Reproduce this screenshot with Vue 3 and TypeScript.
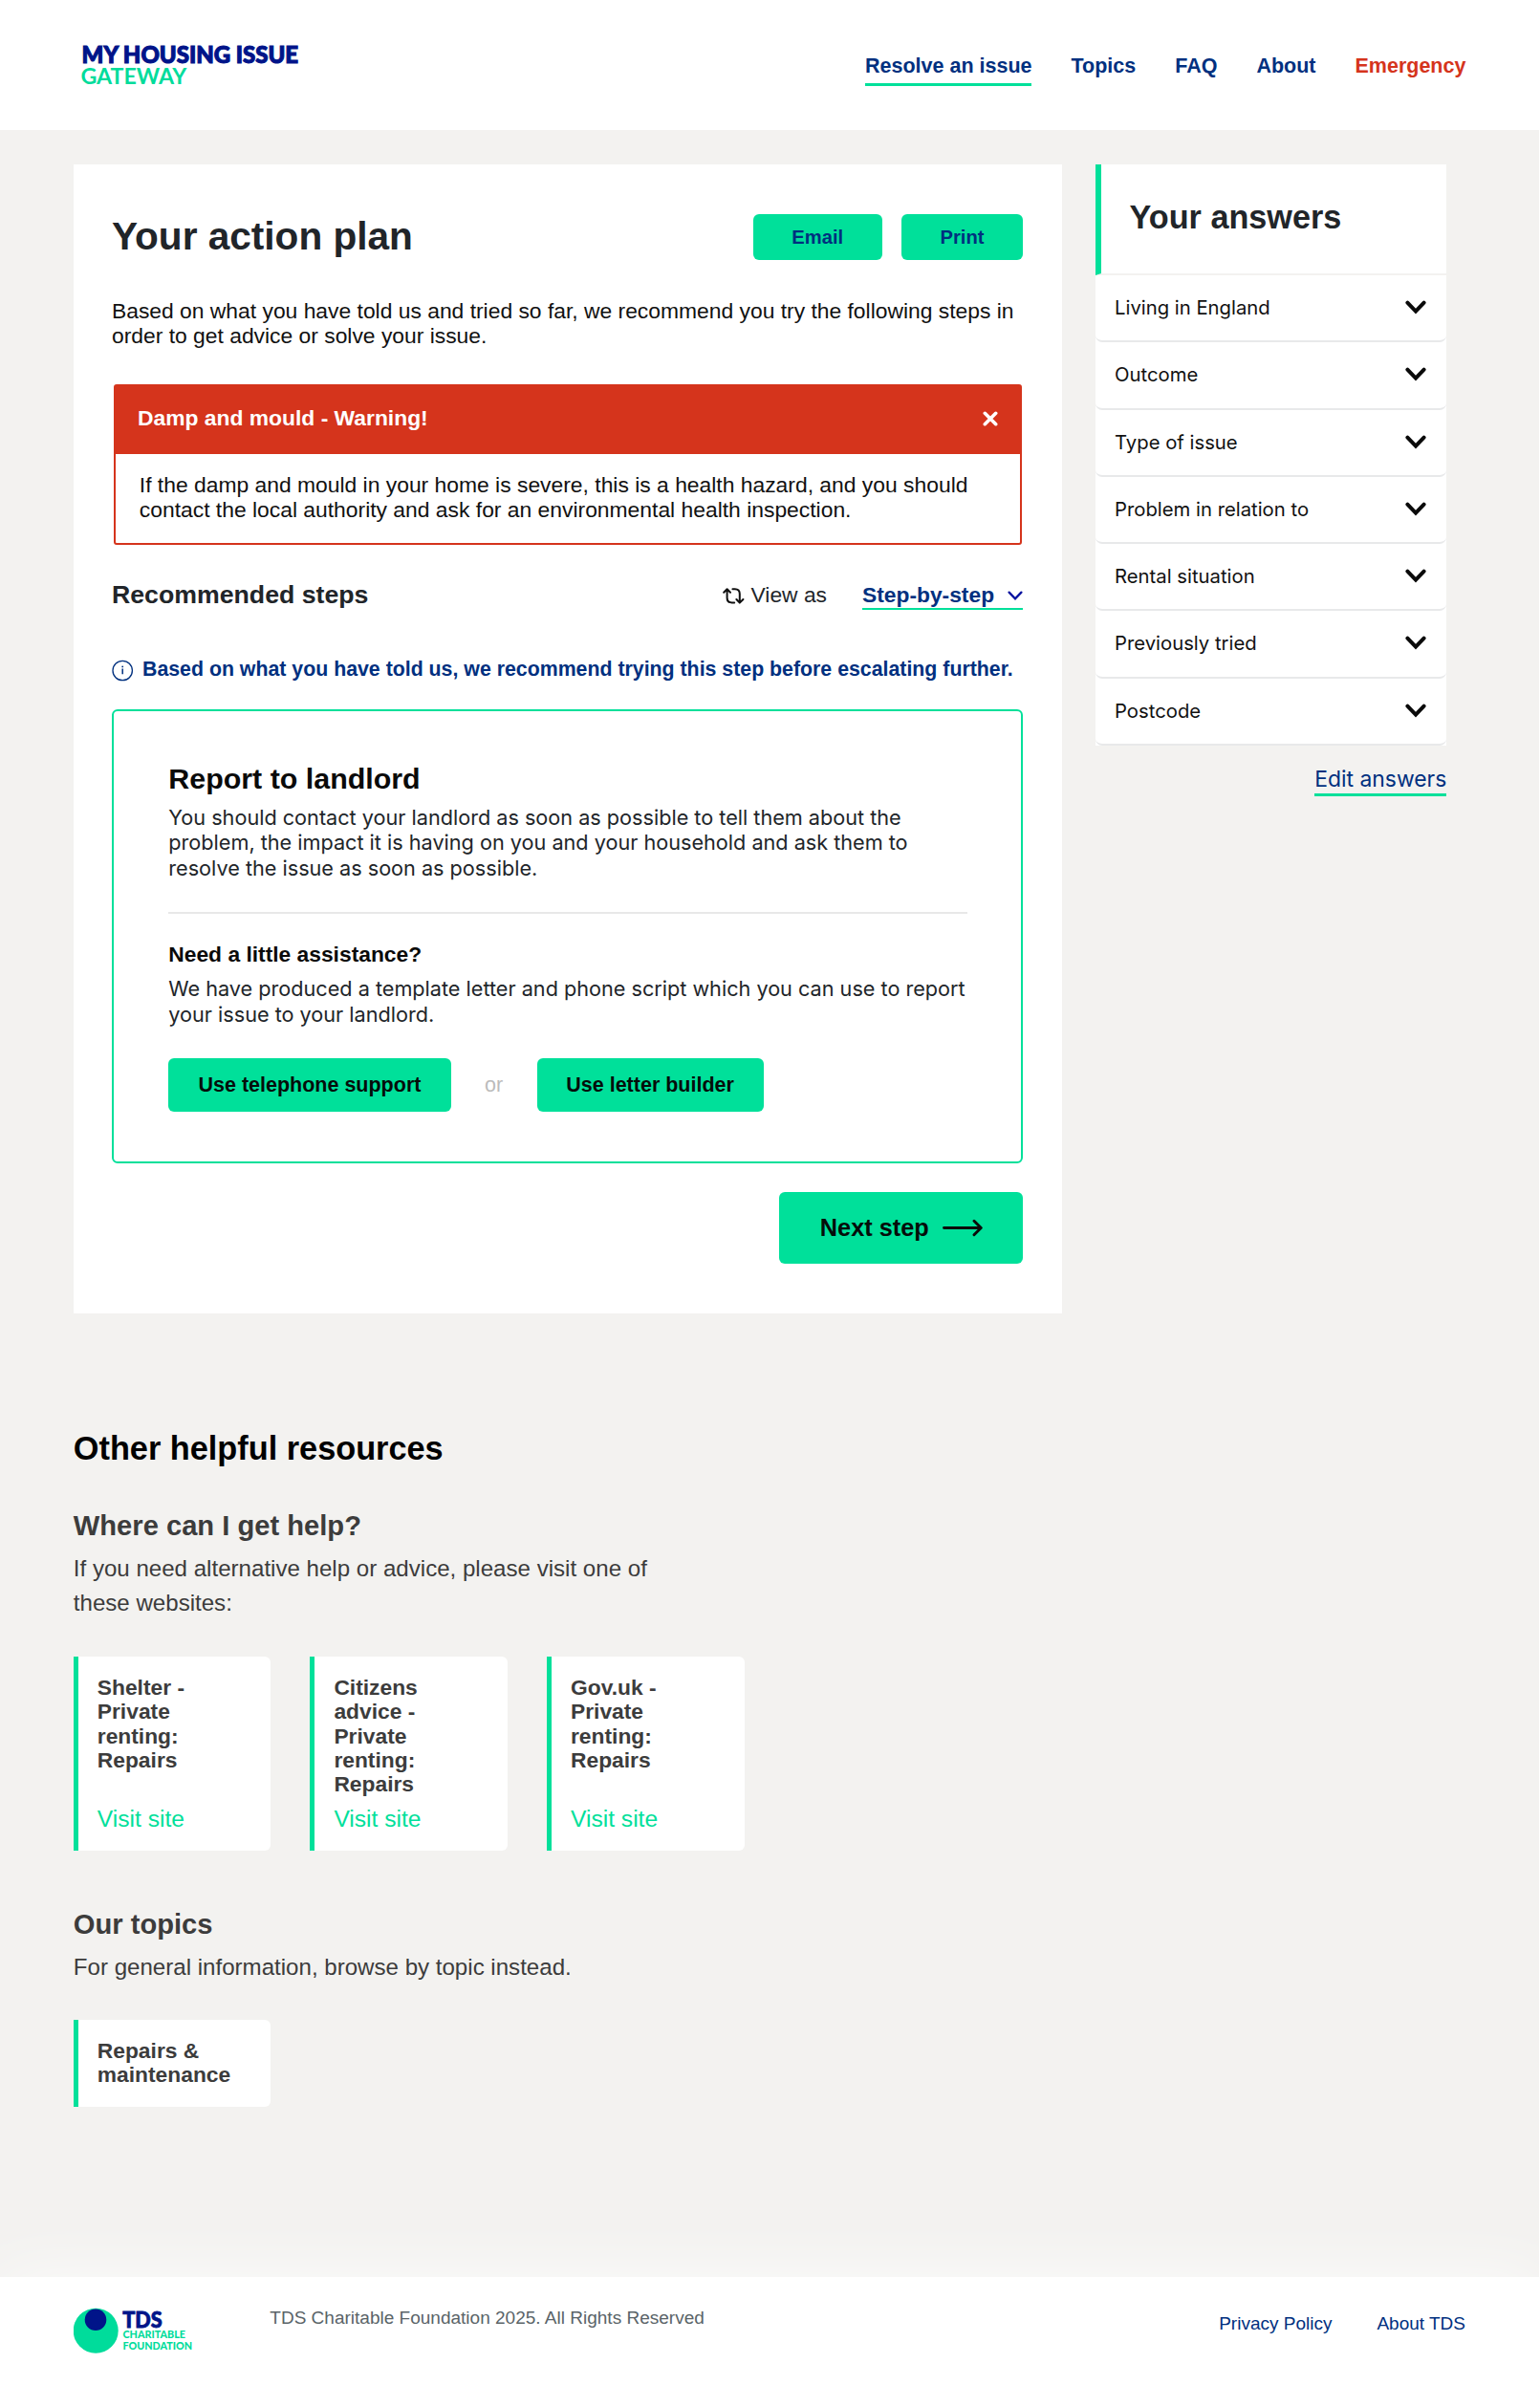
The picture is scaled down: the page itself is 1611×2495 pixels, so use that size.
<script setup lang="ts">
interface NavItem {
  label: string
  active?: boolean
  urgent?: boolean
}

interface Site {
  name: string
}

const nav: NavItem[] = [
  { label: 'Resolve an issue', active: true },
  { label: 'Topics' },
  { label: 'FAQ' },
  { label: 'About' },
  { label: 'Emergency', urgent: true },
]

const answers: string[] = [
  'Living in England',
  'Outcome',
  'Type of issue',
  'Problem in relation to',
  'Rental situation',
  'Previously tried',
  'Postcode',
]

const sites: Site[] = [
  { name: 'Shelter - Private renting: Repairs' },
  { name: 'Citizens advice - Private renting: Repairs' },
  { name: 'Gov.uk - Private renting: Repairs' },
]
</script>

<template>
  <div class="page">
    <header class="header">
      <svg class="brand" width="240" height="60" viewBox="0 0 240 60">
        <text class="brand-top" x="8.6" y="26" textLength="226.4" lengthAdjust="spacingAndGlyphs">MY HOUSING ISSUE</text>
        <text class="brand-sub" x="7.4" y="48" textLength="111" lengthAdjust="spacingAndGlyphs">GATEWAY</text>
      </svg>
      <nav class="nav">
        <a v-for="item in nav" :key="item.label" :class="{ active: item.active, urgent: item.urgent }">{{ item.label }}</a>
      </nav>
    </header>

    <main class="main">
      <section class="plan">
        <div class="plan-head">
          <h1>Your action plan</h1>
          <div class="plan-actions">
            <button class="btn email">Email</button>
            <button class="btn print">Print</button>
          </div>
        </div>
        <p class="intro">Based on what you have told us and tried so far, we recommend you try the following steps in<br />order to get advice or solve your issue.</p>

        <div class="alert">
          <div class="alert-head">
            <span>Damp and mould - Warning!</span>
            <svg width="16" height="16" viewBox="0 0 16 16"><path d="M2.3 2.3 13.7 13.7M13.7 2.3 2.3 13.7" stroke="#fff" stroke-width="3.6" stroke-linecap="round" /></svg>
          </div>
          <p>If the damp and mould in your home is severe, this is a health hazard, and you should<br />contact the local authority and ask for an environmental health inspection.</p>
        </div>

        <div class="steps-head">
          <h2>Recommended steps</h2>
          <div class="view">
            <svg class="cycle" width="23" height="17" viewBox="0 0 23 17" fill="none" stroke="#111" stroke-width="2" stroke-linecap="round" stroke-linejoin="round">
              <path d="M1.2 4.8 4.6 1.3 8 4.8M4.6 1.6V10.4Q4.6 15.4 9.6 15.4H12.2" />
              <path d="M10.4 1.3H12.8Q17.8 1.3 17.8 6.3V15.2M14.4 12 17.8 15.6 21.4 12" />
            </svg>
            <span class="view-label">View as</span>
            <span class="select">Step-by-step
              <svg width="16" height="11" viewBox="0 0 16 11"><path d="M1.6 1.6 8 8.4 14.4 1.6" fill="none" stroke="#0a14a0" stroke-width="2.3" stroke-linecap="round" /></svg>
            </span>
          </div>
        </div>

        <div class="info">
          <svg width="23" height="23" viewBox="0 0 23 23"><circle cx="11.2" cy="11.5" r="10.2" fill="none" stroke="#00307f" stroke-width="1.3" /><path d="M11.2 9.4V15.2" stroke="#00307f" stroke-width="1.5" /><circle cx="11.2" cy="7.4" r=".9" fill="#00307f" /></svg>
          <strong>Based on what you have told us, we recommend trying this step before escalating further.</strong>
        </div>

        <div class="step">
          <h3>Report to landlord</h3>
          <p>You should contact your landlord as soon as possible to tell them about the<br />problem, the impact it is having on you and your household and ask them to<br />resolve the issue as soon as possible.</p>
          <hr />
          <h4>Need a little assistance?</h4>
          <p>We have produced a template letter and phone script which you can use to report<br />your issue to your landlord.</p>
          <div class="step-actions">
            <button class="btn phone">Use telephone support</button>
            <span>or</span>
            <button class="btn letter">Use letter builder</button>
          </div>
        </div>

        <button class="btn next">
          Next step
          <svg width="42" height="19" viewBox="0 0 42 19"><path d="M1.5 9.5H40M33 2.2 40.3 9.5 33 16.8" fill="none" stroke="#0a0a0a" stroke-width="2.9" stroke-linecap="round" stroke-linejoin="round" /></svg>
        </button>
      </section>

      <aside class="side">
        <div class="side-head">Your answers</div>
        <ul>
          <li v-for="a in answers" :key="a">
            <span>{{ a }}</span>
            <svg width="22" height="15" viewBox="0 0 22 15"><path d="M2.4 2.6 11 11.6 19.6 2.6" fill="none" stroke="#0a0a0a" stroke-width="4" stroke-linecap="round" /></svg>
          </li>
        </ul>
        <a class="edit">Edit answers</a>
      </aside>
    </main>

    <section class="resources">
      <h2>Other helpful resources</h2>
      <h3 class="where">Where can I get help?</h3>
      <p>If you need alternative help or advice, please visit one of<br />these websites:</p>
      <div class="cards sites">
        <div v-for="s in sites" :key="s.name" class="card">
          <strong>{{ s.name }}</strong>
          <a>Visit site</a>
        </div>
      </div>
      <h3 class="topics">Our topics</h3>
      <p>For general information, browse by topic instead.</p>
      <div class="cards topic">
        <div class="card"><strong>Repairs &amp; maintenance</strong></div>
      </div>
    </section>

    <footer class="footer">
      <svg class="tds" width="130" height="52" viewBox="0 0 130 52">
        <circle cx="23.2" cy="25.2" r="23.5" fill="#00dc9b" />
        <circle cx="23" cy="13.7" r="11.3" fill="#001489" />
        <text class="tds-a" x="51.2" y="21.5" textLength="41.5" lengthAdjust="spacingAndGlyphs">TDS</text>
        <text class="tds-b" x="51.5" y="33.3" textLength="65.5" lengthAdjust="spacingAndGlyphs">CHARITABLE</text>
        <text class="tds-b" x="51.5" y="45.2" textLength="72.5" lengthAdjust="spacingAndGlyphs">FOUNDATION</text>
      </svg>
      <span class="copy">TDS Charitable Foundation 2025. All Rights Reserved</span>
      <div class="legal">
        <a>Privacy Policy</a>
        <a>About TDS</a>
      </div>
    </footer>
  </div>
</template>

<style>
body {
  margin: 0;
  background: #fff;
}
</style>

<style scoped>
.page {
  width: 1610px;
  height: 2495px;
  overflow: hidden;
  display: flex;
  flex-direction: column;
  background: #f3f2f0;
  font-family: "Liberation Sans", Arial, sans-serif;
  color: #212529;
}
h1, h2, h3, h4, p, ul {
  margin: 0;
  padding: 0;
}
.header {
  height: 136px;
  flex: none;
  display: flex;
  justify-content: space-between;
  align-items: flex-start;
  background: #fff;
  box-sizing: border-box;
  padding: 40px 76.6px 0 77px;
}
.brand {
  display: block;
}
.brand-top {
  font: 900 24.5px Lato, sans-serif;
  fill: #001489;
  stroke: #001489;
  stroke-width: 1.1px;
}
.brand-sub {
  font: 700 23.4px Lato, sans-serif;
  fill: #00dc9b;
}
.nav {
  display: flex;
  gap: 41px;
  padding-top: 14.5px;
}
.nav a {
  height: 35.5px;
  box-sizing: border-box;
  font-size: 21.5px;
  line-height: 28px;
  font-weight: 700;
  color: #00307f;
}
.nav a.active {
  background: linear-gradient(#00e09a, #00e09a) bottom / 100% 3px no-repeat;
}
.nav a.urgent {
  color: #d5341c;
}
.main {
  display: flex;
  align-items: flex-start;
  gap: 35px;
  padding: 36.4px 0 0 77px;
}
.plan {
  width: 1034px;
  height: 1201.2px;
  box-sizing: border-box;
  padding: 51.6px 41px 0 40px;
  background: #fff;
  display: flex;
  flex-direction: column;
}
.plan-head {
  display: flex;
  justify-content: space-between;
  height: 48px;
}
.plan-head h1 {
  font-size: 40.6px;
  line-height: 47px;
}
.plan-actions {
  display: flex;
  gap: 20.5px;
}
.btn {
  border: 0;
  padding: 0;
  border-radius: 6px;
  background: #00e09a;
  font-family: inherit;
  font-weight: 700;
  color: #050d0a;
}
.email, .print {
  height: 48px;
  padding-top: 1px;
  font-size: 20.2px;
  color: #00307f;
}
.email {
  width: 134.5px;
}
.print {
  width: 127px;
}
.intro {
  margin-top: 40px;
  font-size: 22.85px;
  line-height: 26.4px;
  color: #111;
  white-space: nowrap;
}
.alert {
  margin: 37px 1.5px 0;
  height: 168px;
  box-sizing: border-box;
  border: 2px solid #d5341c;
  border-radius: 3px;
  color: #111;
}
.alert-head {
  height: 70.8px;
  box-sizing: border-box;
  display: flex;
  justify-content: space-between;
  align-items: center;
  padding: 0 22.5px 3px 23.5px;
  background: #d5341c;
  color: #fff;
  font-size: 22.85px;
  font-weight: 700;
}
.alert p {
  padding: 20.5px 0 0 25.3px;
  font-size: 22.87px;
  line-height: 25.7px;
  white-space: nowrap;
}
.steps-head {
  margin-top: 34.5px;
  height: 34px;
  display: flex;
  justify-content: space-between;
}
.steps-head h2 {
  font-size: 26.7px;
  line-height: 36px;
}
.view {
  display: flex;
  font-size: 22.8px;
  line-height: 36px;
}
.cycle {
  margin: 11px 7px 0 0;
}
.view-label {
  margin-right: 37px;
}
.select {
  width: 168px;
  height: 34px;
  box-sizing: border-box;
  display: flex;
  justify-content: space-between;
  border-bottom: 2px solid #00e09a;
  font-weight: 700;
  color: #00307f;
}
.select svg {
  margin-top: 14px;
}
.info {
  margin-top: 48px;
  height: 27px;
  display: flex;
  color: #00307f;
  font-size: 21.32px;
  line-height: 28px;
  white-space: nowrap;
}
.info svg {
  flex: none;
  margin: 4px 9px 0 0;
}
.step {
  margin-top: 29px;
  height: 474.4px;
  flex: none;
  box-sizing: border-box;
  border: 2px solid #00e09a;
  border-radius: 6px;
  padding: 51.5px 56.5px 0 57.3px;
}
.step h3 {
  font-size: 30.4px;
  line-height: 36px;
  color: #0a0a0a;
}
.step p {
  margin-top: 10px;
  font-family: Inter, sans-serif;
  font-size: 21.65px;
  line-height: 26.4px;
  white-space: nowrap;
}
.step hr {
  height: 2px;
  margin: 32.5px 0 29.5px;
  border: 0;
  background: #e8e8e8;
}
.step h4 {
  font-size: 22.8px;
  line-height: 27px;
  color: #0a0a0a;
}
.step h4 + p {
  margin-top: 9.4px;
}
.step-actions {
  display: flex;
  margin-top: 32.3px;
  font-size: 21.5px;
  line-height: 57px;
}
.step-actions span {
  width: 90px;
  text-align: center;
  color: #bbb;
}
.step-actions .btn {
  height: 56.7px;
  padding-top: 1px;
  font-size: 21.5px;
}
.phone {
  width: 295.3px;
}
.letter {
  width: 237px;
}
.next {
  align-self: flex-end;
  margin-top: 30.3px;
  width: 255px;
  height: 74.7px;
  display: flex;
  align-items: center;
  justify-content: center;
  gap: 14.5px;
  padding-left: 1px;
  font-size: 25.3px;
}
.side {
  width: 367.3px;
  display: flex;
  flex-direction: column;
}
.side-head {
  height: 115.6px;
  box-sizing: border-box;
  border-left: 6px solid #00e09a;
  border-bottom: 2px solid #f3f2f0;
  padding-left: 29.6px;
  background: #fff;
  font-size: 34.2px;
  line-height: 110px;
  font-weight: 700;
}
.side ul {
  list-style: none;
  background: #fff;
}
.side li {
  height: 70.3px;
  box-sizing: border-box;
  border-bottom: 2px solid #e8e9ea;
  border-radius: 0 0 7px 7px;
  display: flex;
  justify-content: space-between;
  align-items: center;
  padding: 0 21px 1.4px 20px;
  font-family: Inter, sans-serif;
  font-size: 20.3px;
  color: #111;
}
.edit {
  align-self: flex-end;
  margin-top: 21.3px;
  height: 28.7px;
  border-bottom: 3px solid #00e09a;
  font-family: Inter, sans-serif;
  font-size: 22.9px;
  line-height: 28px;
  color: #00307f;
}
.resources {
  padding: 120.6px 0 0 76.8px;
  color: #3c3c3c;
}
.resources h2 {
  font-size: 34.3px;
  line-height: 42px;
  color: #000;
}
.resources h3 {
  font-size: 29.15px;
  line-height: 36px;
}
.resources p {
  margin-top: 9.2px;
  font-size: 24.1px;
  line-height: 35.3px;
}
.where {
  margin-top: 42px;
}
.topics {
  margin-top: 59px;
}
.cards {
  display: flex;
  gap: 41px;
}
.sites {
  margin-top: 38.9px;
  height: 203.4px;
}
.topic {
  margin-top: 36.8px;
  height: 91.7px;
}
.card {
  width: 206.6px;
  box-sizing: border-box;
  border-left: 5px solid #00e09a;
  border-radius: 0 6px 6px 0;
  padding: 20px 20px 18px;
  background: #fff;
  display: flex;
  flex-direction: column;
  justify-content: space-between;
}
.card strong {
  font-size: 22.8px;
  line-height: 25.4px;
}
.card a {
  font-size: 24.6px;
  line-height: 30px;
  color: #00e09a;
}
.footer {
  margin-top: auto;
  height: 113.3px;
  flex: none;
  box-sizing: border-box;
  display: flex;
  align-items: flex-start;
  padding: 31.3px 77px 0;
  background: #fff;
  box-shadow: 0 0 70px rgba(255, 255, 255, 0.8);
}
.tds {
  width: 130px;
  flex: none;
}
.tds-a {
  font: 900 22.5px Lato, sans-serif;
  fill: #001489;
  stroke: #001489;
  stroke-width: 0.8px;
}
.tds-b {
  font: 900 11.3px Lato, sans-serif;
  fill: #00dc9b;
}
.copy {
  margin-left: 75.3px;
  font-size: 19.03px;
  line-height: 24px;
  color: #5a6468;
}
.legal {
  margin: 5.5px 0 0 auto;
  display: flex;
  gap: 47px;
  font-size: 19px;
  line-height: 24px;
  color: #00307f;
}
</style>
